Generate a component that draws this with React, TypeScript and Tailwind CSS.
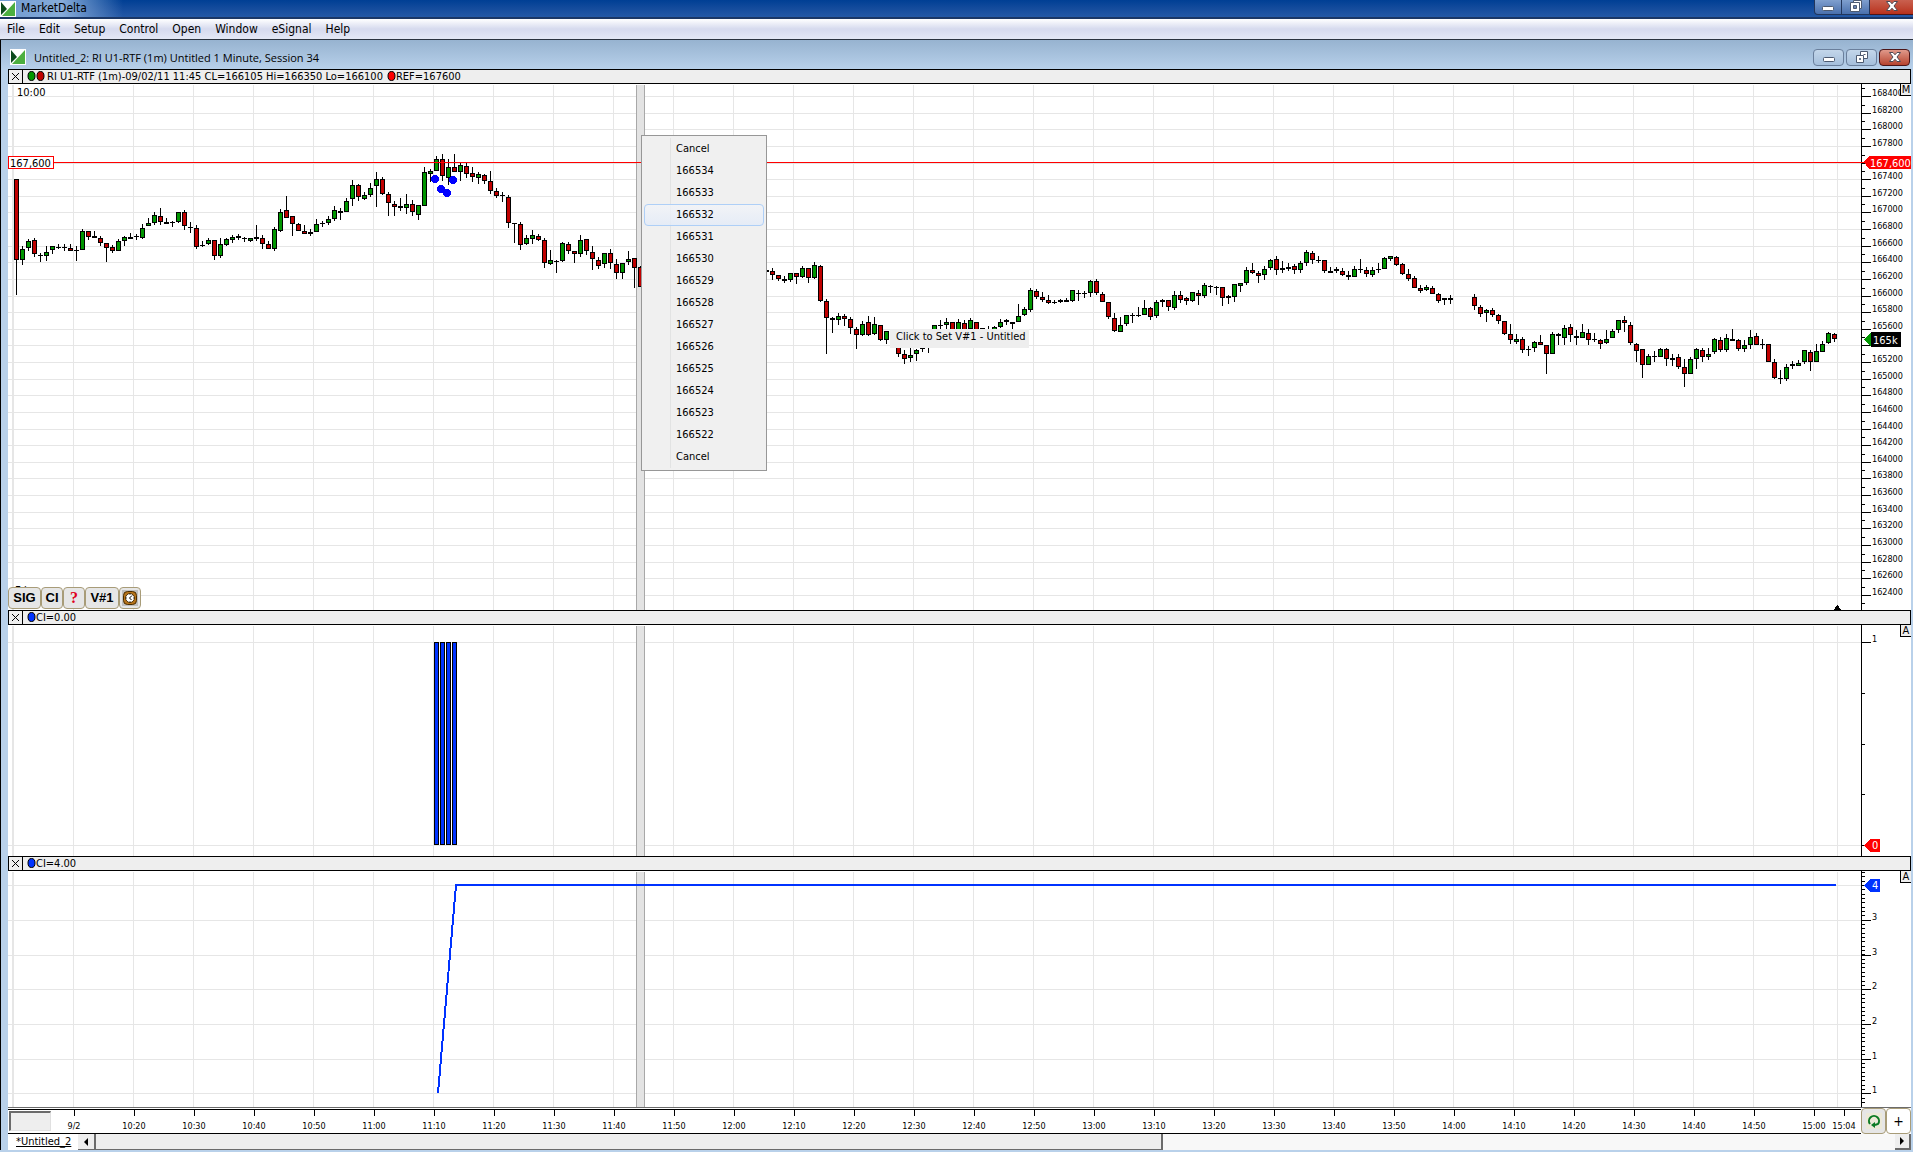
import { ReactNode } from "react";
import { clsx } from "clsx";

type Direction = "up" | "down" | "flat";

// direction, high, body top, body bottom, low (chart canvas units)
const CANDLE_DATA = `
d179,179,260,295 u246,249,260,265 u239,241,248,251 d238,240,254,257 f253,255,256,262 u246,252,256,261 u246,246,250,254 f244,247,248,249 f244,247,248,251 d244,248,251,251
f246,250,251,261 u229,231,250,250 d231,231,237,240 f231,236,238,238 d236,238,243,246 d243,243,248,262 d245,247,251,253 u239,241,251,251 u236,237,241,246 f233,237,239,239
f234,236,237,240 u224,228,238,239 u218,223,226,226 u212,215,223,225 d208,216,222,225 f218,222,224,224 f221,222,223,227 u212,212,222,223 d210,212,226,230 f222,227,228,233
d225,228,247,249 f241,245,246,247 u238,240,244,245 d240,240,256,260 u238,244,256,258 u238,239,245,246 u235,237,240,243 f234,236,238,240 f237,238,239,242 u238,238,241,242
f225,237,239,241 d235,238,244,249 d241,244,249,249 u227,229,249,251 u209,212,231,232 d196,210,218,218 d216,216,224,236 d223,224,231,231 d225,231,234,234 f229,232,234,236
u219,224,232,232 f221,223,224,227 u216,219,223,225 u206,210,219,221 f208,211,213,220 u198,201,212,212 u180,185,199,206 d184,185,197,201 u192,195,199,200 u183,188,195,197
u172,179,186,207 d177,179,194,195 d192,194,203,216 d201,204,207,216 f198,206,208,211 u194,204,208,214 d200,204,212,216 u205,205,215,220 u167,172,206,206 u169,171,174,182
u156,159,171,171 d154,159,176,181 u159,167,178,185 d154,167,172,172 u163,165,172,181 d163,166,174,178 d167,173,177,182 u172,174,178,184 d174,175,181,184 d171,181,191,194
d188,191,196,198 f192,195,196,202 d195,197,223,228 f223,223,224,243 d222,224,245,250 u235,238,244,245 u230,235,239,244 d234,236,240,241 d238,240,263,268 u250,260,264,265
f260,261,262,273 u242,243,261,262 d242,244,251,254 d251,251,254,263 u235,240,254,257 d239,239,251,255 d246,252,259,270 d257,260,266,269 u253,253,264,268 d249,253,263,269
d259,264,273,279 u263,263,273,279 u251,259,262,265 d258,258,268,288 d266,267,287,287 f268,268,269,270 f268,268,269,270 f268,268,269,270 f268,268,269,270 f268,268,269,270
f268,268,269,270 f268,268,269,270 f268,268,269,270 f268,268,269,270 f268,268,269,270 f268,268,269,270 f268,268,269,270 f268,268,269,270 f268,268,269,270 f268,268,269,270
f268,268,269,270 f268,268,269,270 f268,268,269,270 f268,268,269,270 f268,268,269,270 f270,270,272,272 d268,271,275,280 d275,275,279,281 f276,279,281,283 u273,273,280,282
d273,273,277,284 u266,268,277,278 d268,268,278,283 u262,265,278,279 d265,266,301,302 d299,301,318,354 f317,318,320,333 u313,316,320,325 d314,316,319,326 d317,319,328,334
d327,329,335,349 u321,324,335,336 d316,322,335,336 u317,324,334,335 d325,325,340,341 u331,331,340,344 d329,332,338,340 d336,338,354,357 d350,354,359,364 u348,355,358,362
u349,350,354,361 f346,348,349,352 f340,343,344,353 u325,325,335,335 f320,325,326,329 u318,322,325,329 d322,322,335,335 u319,322,335,335 d320,323,330,334 u318,320,329,334
d322,322,332,334 u328,328,332,334 f326,331,332,334 u326,327,332,334 u319,322,327,328 f319,320,322,325 f322,322,324,329 u304,316,322,322 u307,309,315,316 u288,290,310,312
d289,291,297,299 d292,297,300,302 d295,300,303,304 f300,302,303,304 f299,300,302,303 f298,300,302,302 u290,290,301,302 f290,293,294,301 f291,293,294,298 u280,281,293,297
d279,281,293,295 d292,294,302,302 d302,302,317,319 d313,318,331,332 u317,325,332,332 u315,315,324,326 f313,315,316,323 f307,315,316,317 u300,308,315,315 d307,308,317,320
u300,302,316,318 f299,300,302,307 d300,300,307,311 u291,295,308,310 d291,295,300,303 d297,298,301,305 u292,292,301,302 d290,293,296,305 u283,285,296,298 f285,286,287,293
f286,287,288,295 d287,287,298,306 f295,296,298,304 u284,284,297,302 u283,283,286,292 u267,270,283,285 d263,270,273,274 d271,273,276,283 u266,269,275,280 u259,260,268,270
d256,259,270,275 f261,268,270,273 f263,267,269,271 d264,266,270,274 u261,263,270,273 u250,252,263,266 d251,253,260,264 f256,260,261,263 d260,260,271,273 f267,271,273,273
f267,269,271,273 d268,271,275,276 f271,275,277,280 u266,269,277,277 f259,269,270,273 d267,270,274,277 u267,270,275,277 f263,269,270,273 u257,258,269,269 u256,256,259,261
d256,257,265,266 d263,264,274,275 d269,274,279,281 d276,278,288,288 d285,288,291,293 u285,287,290,291 d286,288,294,294 d293,294,301,303 f298,298,300,305 f295,298,300,304
- - - d294,297,306,310 d305,307,314,317 u309,310,313,322 d308,310,315,317 d314,315,321,324 d321,321,334,335 d324,334,340,344
u334,339,342,344 d337,339,350,353 f346,349,350,356 u341,342,348,352 d335,342,345,345 d345,345,354,374 u332,334,354,354 f333,334,336,345 u325,328,338,345 d324,327,335,342
f330,336,338,345 u324,332,338,338 d329,333,340,345 f333,339,340,342 d339,340,344,349 u330,339,343,344 u329,331,338,338 u320,320,330,333 d316,320,323,332 d322,325,343,345
d343,344,351,362 d349,349,365,378 u354,356,365,365 f351,356,357,362 u348,349,357,357 d348,349,359,366 f354,358,360,366 d354,357,367,369 d359,367,374,387 u357,359,374,374
u348,349,359,369 d348,350,357,362 u348,354,357,360 u338,339,352,354 d337,340,350,352 u334,338,350,352 f329,339,341,341 d339,340,349,351 u340,345,349,352 u330,337,345,349
d333,336,345,345 f339,344,345,349 d344,344,362,362 d359,362,378,379 f370,378,379,384 u364,367,379,381 f361,364,366,369 u360,363,366,366 u350,350,362,364 d350,352,362,371
u344,351,362,362 u341,344,352,352 u332,333,343,344 d333,334,339,342
`;

const DIRECTIONS: Record<string, Direction> = { u: "up", d: "down", f: "flat" };

const BODY_COLORS: Record<Direction, string> = {
  up: "#009600",
  down: "#c00000",
  flat: "#000000",
};

const candles = CANDLE_DATA.trim()
  .split(/\s+/)
  .map((entry, i) => ({ entry, x: 16 + i * 6 }))
  .filter(({ entry }) => entry !== "-")
  .map(({ entry, x }) => {
    const [high, top, bottom, low] = entry.slice(1).split(",").map(Number);
    return { x, direction: DIRECTIONS[entry[0]], high, top, bottom, low };
  });

const gridColumns = [...Array.from({ length: 30 }, (_, i) => 73 + i * 60), 1837];

// The last price flag takes the place of this row's label
const LAST_PRICE_ROW = 165400;

const priceRows = Array.from({ length: 31 }, (_, i) => ({
  price: 168400 - i * 200,
  y: Math.round(96 + i * 16.63),
}));

const countRows = [
  { y: 885, label: "4" },
  { y: 920, label: "3" },
  { y: 955, label: "3" },
  { y: 989, label: "2" },
  { y: 1024, label: "2" },
  { y: 1059, label: "1" },
  { y: 1093, label: "1" },
];

const timeLabels = Array.from({ length: 30 }, (_, i) => {
  const minutes = 610 + i * 10;
  const text = `${Math.floor(minutes / 60)}:${String(minutes % 60).padStart(2, "0")}`;
  return { x: 74 + i * 60, text: i === 0 ? "9/2" : text };
}).concat({ x: 1844, text: "15:04" });

const menuItems = ["File", "Edit", "Setup", "Control", "Open", "Window", "eSignal", "Help"];

const priceChoices = [
  "Cancel",
  ...Array.from({ length: 13 }, (_, i) => String(166534 - i)),
  "Cancel",
];

function Logo() {
  return (
    <svg width="16" height="16" viewBox="0 0 16 16" className="shrink-0">
      <rect width="16" height="16" fill="#fff" />
      <path d="M1 1L7 8L1 14Z" fill="#0b4a1c" />
      <path d="M15 1V15H2Z" fill="#4caf3f" />
    </svg>
  );
}

function MinimizeIcon() {
  return (
    <svg width="12" height="12" viewBox="0 0 12 12">
      <rect x="0.5" y="6.5" width="11" height="4" rx="1" fill="#fff" stroke="#4d5a70" />
    </svg>
  );
}

function MaximizeIcon() {
  return (
    <svg width="12" height="12" viewBox="0 0 12 12" fill="#fff" stroke="#4d5a70">
      <path d="M3.500 0.500H11.500V8.500H3.500Z" />
      <path d="M0.500 2.500H9.500V11.500H0.500Z" />
      <path d="M3.500 5.500H6.500V8.500H3.500Z" fill="#6d87b5" />
    </svg>
  );
}

function RestoreIcon() {
  return (
    <svg width="12" height="12" viewBox="0 0 12 12" fill="#fff" stroke="#4d5a70">
      <path d="M4.500 0.500H11.500V7.500H4.500Z" />
      <path d="M7.500 3.500H9.500" />
      <path d="M0.500 4.500H7.500V11.500H0.500Z" />
      <path d="M3.500 7.500H4.500V8.500H3.500Z" fill="#6d87b5" />
    </svg>
  );
}

function CloseIcon() {
  return (
    <svg width="12" height="12" viewBox="0 0 12 12">
      <path
        d="M0.500 1.500H4L6 3.800L8 1.500H11.500L8 6L11.500 10.500H8L6 8.200L4 10.500H0.500L4 6Z"
        fill="#fff"
        stroke="#4d4a55"
      />
    </svg>
  );
}

function ClockIcon() {
  return (
    <svg width="16" height="16" viewBox="0 0 16 16" className="shrink-0">
      <rect width="16" height="16" fill="#c0c0c0" />
      <rect x="1.500" y="1.500" width="13" height="13" rx="4" fill="#b8741a" stroke="#4a2c00" />
      <circle cx="8" cy="8" r="4.500" fill="#fff" stroke="#4a2c00" />
      <path d="M10 5.500L7.500 8L9.500 10" fill="none" stroke="#000" />
      <path d="M8 4V5M8 11V12M4 8H5M11 8H12" stroke="#555" />
    </svg>
  );
}

function RefreshIcon() {
  return (
    <svg width="16" height="16" viewBox="0 0 16 16">
      <rect width="16" height="16" fill="#ece9d8" />
      <path d="M4 11A5 5 0 1 1 12 11L9 12" fill="none" stroke="#0b7a24" strokeWidth="2" />
      <path d="M5 12L9 9V15Z" fill="#0b7a24" />
    </svg>
  );
}

// The round series marker shown in front of a legend entry
function SeriesDot({ color }: { color: string }) {
  return (
    <svg width="9" height="11" viewBox="0 0 9 11" className="shrink-0">
      <ellipse cx="4.5" cy="5" rx="3.5" ry="4.500" fill={color} stroke="#000" />
    </svg>
  );
}

function PaneHeader({ children }: { children: ReactNode }) {
  return (
    <div className="flex h-[15px] items-center border-y border-r border-black bg-[#eeeeee] text-[11px] leading-3">
      <button
        type="button"
        aria-label="Close pane"
        className="flex h-full w-[15px] shrink-0 items-center justify-center border-x border-black"
      >
        <svg width="7" height="7" viewBox="0 0 7 7" stroke="#000">
          <path d="M0 0L7 7M7 0L0 7" />
        </svg>
      </button>
      <div className="flex items-center pl-1 whitespace-pre">{children}</div>
    </div>
  );
}

interface PaneProps {
  top: number;
  height: number;
  rows: number[];
  axis: ReactNode;
  badge: string;
  children?: ReactNode;
  overlay?: ReactNode;
}

function Pane({ top, height, rows, axis, badge, children, overlay }: PaneProps) {
  return (
    <div className="relative flex bg-white">
      <svg height={height} className="min-w-0 flex-1" shapeRendering="crispEdges">
        {rows.map((y) => (
          <rect key={y} x="0" y={y - top} width="100%" height="1" fill="#e6e6e6" />
        ))}
        <g transform={`translate(-8 ${-top})`}>
          <rect x="12" y={top + 1} width="2" height={height} fill="#e6e6e6" />
          {gridColumns.map((x) => (
            <rect key={x} x={x} y={top + 1} width="1" height={height} fill="#e6e6e6" />
          ))}
          <rect x="636" y={top + 1} width="9" height={height} fill="#e3e3e3" />
          <rect x="636" y={top + 1} width="1" height={height} fill="#a8a8a8" />
          <rect x="644" y={top + 1} width="1" height={height} fill="#a8a8a8" />
          {children}
        </g>
      </svg>
      <svg width="50" height={height} className="shrink-0" shapeRendering="crispEdges">
        <g transform={`translate(-1861 ${-top})`}>
          <rect x="1861" y={top} width="1" height={height} />
          {axis}
        </g>
      </svg>
      <button
        type="button"
        className="absolute top-0 right-0 h-3 w-[11px] border-b border-l border-black bg-[#eeeeee] text-[11px] leading-[11px]"
      >
        {badge}
      </button>
      {overlay}
    </div>
  );
}

function Tick({ y, major }: { y: number; major?: boolean }) {
  return <rect x="1862" y={y} width={major ? 9 : 3} height="1" />;
}

function AxisFlag({ y, color, label }: { y: number; color: string; label: string }) {
  return (
    <>
      <path d={`M1864 ${y}L1870 ${y - 6}H1880V${y + 7}H1870Z`} fill={color} />
      <text x="1872" y={y + 4} fontSize="11" fill="#fff">
        {label}
      </text>
    </>
  );
}

function PricePane() {
  return (
    <Pane
      top={84}
      height={526}
      rows={priceRows.map((row) => row.y)}
      badge="M"
      axis={
        <>
          {priceRows.map(({ price, y }) => (
            <g key={price}>
              <Tick y={y - 8} />
              <Tick y={y} major />
              {price !== LAST_PRICE_ROW && (
                <text x="1872" y={y} fontSize="9">
                  {price}
                </text>
              )}
            </g>
          ))}
          <Tick y={603} />
          <rect x="1861" y="162" width="6" height="1" fill="#f00" />
          <path d="M1864 162L1869 156H1911V169H1869Z" fill="#f00" />
          <text x="1870" y="167" fontSize="11" fill="#fff">
            167,600
          </text>
          <path d="M1864 340L1871 332V347Z" fill="#009600" />
          <rect x="1871" y="332" width="30" height="15" />
          <text x="1873" y="344" fontSize="11" fill="#fff">
            165k
          </text>
        </>
      }
      overlay={
        <div className="absolute bottom-px left-0 flex h-[22px] font-['Liberation_Sans',sans-serif] text-[13px] font-bold">
          <ToolButton className="w-[33px]">SIG</ToolButton>
          <ToolButton className="w-[22px]">CI</ToolButton>
          <ToolButton className="w-[22px] font-['Liberation_Serif',serif] text-base text-[#e00020]">
            ?
          </ToolButton>
          <ToolButton className="w-[34px]">V#1</ToolButton>
          <ToolButton className="w-[22px]" label="Time">
            <ClockIcon />
          </ToolButton>
        </div>
      }
    >
      {candles.map(({ x, direction, high, top, bottom, low }) => (
        <g key={x}>
          <rect x={x} y={high} width="1" height={low - high} />
          <rect x={x - 2} y={top} width="5" height={bottom - top} />
          {bottom - top > 2 && (
            <rect x={x - 1} y={top + 1} width="3" height={bottom - top - 2} fill={BODY_COLORS[direction]} />
          )}
        </g>
      ))}
      <rect x="8" y="162" width="5000" height="1" fill="#f00" />
      <rect x="8.500" y="156.500" width="45" height="12" fill="#fff" stroke="#f00" />
      <text x="10" y="167" fontSize="11">
        167,600
      </text>
      <text x="17" y="96" fontSize="11">
        10:00
      </text>
      <text x="15" y="594" fontSize="11">
        Fri
      </text>
      {[[435, 179], [441, 189], [447, 193], [453, 180]].map(([x, y]) => (
        <circle key={x} cx={x} cy={y} r="4" fill="#00f" />
      ))}
      <path d="M1834 610L1837 605H1838L1841 610Z" />
    </Pane>
  );
}

function SignalPane() {
  return (
    <Pane
      top={625}
      height={231}
      rows={[642, 845]}
      badge="A"
      axis={
        <>
          <Tick y={642} major />
          <text x="1872" y="642" fontSize="9">
            1
          </text>
          {[693, 744, 794, 845].map((y) => (
            <Tick key={y} y={y} />
          ))}
          <AxisFlag y={845} color="#f00" label="0" />
        </>
      }
    >
      {[434, 440, 446, 452].map((x) => (
        <g key={x}>
          <rect x={x} y="642" width="5" height="203" />
          <rect x={x + 1} y="643" width="3" height="201" fill="#0033ff" />
        </g>
      ))}
    </Pane>
  );
}

function CountPane() {
  return (
    <Pane
      top={871}
      height={236}
      rows={countRows.map((row) => row.y)}
      badge="A"
      axis={
        <>
          {Array.from({ length: 54 }, (_, i) => (
            <Tick key={i} y={Math.round(872 + i * 4.34)} />
          ))}
          {countRows.slice(1).map(({ y, label }) => (
            <g key={y}>
              <Tick y={y} major />
              <text x="1872" y={y} fontSize="9">
                {label}
              </text>
            </g>
          ))}
          <AxisFlag y={885} color="#0033ff" label="4" />
        </>
      }
    >
      <path d="M438 1093L456 885H1836" fill="none" stroke="#0033ff" strokeWidth="2" />
    </Pane>
  );
}

interface ToolButtonProps {
  children: ReactNode;
  className?: string;
  label?: string;
}

function ToolButton({ children, className, label }: ToolButtonProps) {
  return (
    <button
      type="button"
      aria-label={label}
      className={clsx(
        "flex items-center justify-center rounded-sm border border-[#a89c78] bg-[#e6e6e6] leading-4",
        className,
      )}
    >
      {children}
    </button>
  );
}

function TimeAxis() {
  return (
    <div className="flex h-[27px] border-t border-[#6b6b6b] bg-white">
      <div className="relative mt-px min-w-0 flex-1 border-y border-black">
        <svg width="100%" height="23" className="block" shapeRendering="crispEdges">
          {timeLabels.map(({ x, text }) => (
            <g key={x}>
              <rect x={x - 8} y="0" width="1" height="6" />
              <text x={x - 8} y="19" fontSize="9" textAnchor="middle">
                {text}
              </text>
            </g>
          ))}
        </svg>
        <div className="absolute top-px left-px h-5 w-[42px] border border-t-2 border-l-2 border-[#e0e0e0] border-t-[#6b6b6b] border-l-[#6b6b6b] bg-[#eeeeee]" />
      </div>
      <button
        type="button"
        aria-label="Refresh"
        className="flex w-[25px] items-center justify-center rounded-sm border border-[#a89c78] bg-[#e6e6e6]"
      >
        <RefreshIcon />
      </button>
      <button
        type="button"
        className="w-[25px] rounded-sm border border-[#a89c78] bg-white text-sm leading-4"
      >
        +
      </button>
    </div>
  );
}

function SheetBar() {
  return (
    <div className="flex h-4 bg-white text-[11px] leading-4">
      <a href="#untitled-2" className="w-[70px] pl-2 underline">
        *Untitled_2
      </a>
      <button
        type="button"
        aria-label="Scroll left"
        className="flex w-[18px] items-center justify-center border-r-2 border-b border-[#6b6b6b] bg-[#eeeeee]"
      >
        <svg width="4" height="8" viewBox="0 0 4 8">
          <path d="M4 0V8L0 4Z" />
        </svg>
      </button>
      <div className="flex flex-1 bg-[#f8f8f8]">
        <div className="w-[59.3%] border-r-2 border-b border-[#6b6b6b] bg-[#eeeeee]" />
      </div>
      <button
        type="button"
        aria-label="Scroll right"
        className="flex w-4 items-center justify-center border-r-2 border-b-2 border-[#6b6b6b] bg-[#eeeeee]"
      >
        <svg width="4" height="8" viewBox="0 0 4 8">
          <path d="M0 0V8L4 4Z" />
        </svg>
      </button>
    </div>
  );
}

function PriceMenu() {
  return (
    <div
      role="menu"
      className="absolute top-[135px] left-[641px] w-[126px] border border-[#979797] bg-[#f0f0f0] p-[2px] text-[11px] leading-5"
    >
      <div className="absolute inset-y-[2px] left-7 w-px bg-[#e2e3e3]" />
      {priceChoices.map((choice, i) => (
        <button
          key={i}
          type="button"
          role="menuitem"
          className={clsx(
            "relative block h-[22px] w-full rounded-sm border pl-[31px] text-left",
            choice === "166532"
              ? "border-[#aecff7] bg-linear-to-b from-[#f2f4f8]/80 to-[#e3ebf8]/80"
              : "border-transparent",
          )}
        >
          {choice}
        </button>
      ))}
    </div>
  );
}

export default function App() {
  return (
    <div className="relative min-h-screen bg-[#b9d1ea] font-['DejaVu_Sans_Condensed','Noto_Sans',sans-serif] text-black">
      <header className="flex h-[19px] justify-between border-b-2 border-b-[#1b3766] bg-linear-to-b from-[#003f94] to-[#2458a5]">
        <div className="flex items-center bg-linear-to-r from-[#6f9ad0] via-[#86abd9] to-transparent pr-9">
          <Logo />
          <h1 className="pb-px pl-[5px] text-[12px] leading-4">MarketDelta</h1>
        </div>
        <div className="flex h-[15px]">
          <button
            type="button"
            aria-label="Minimize"
            className="flex w-7 items-start justify-center rounded-bl border border-t-0 border-[#22365c] bg-linear-to-b from-[#7f9fce] to-[#4a70ad]"
          >
            <MinimizeIcon />
          </button>
          <button
            type="button"
            aria-label="Maximize"
            className="flex w-7 items-start justify-center border-r border-b border-[#22365c] bg-linear-to-b from-[#7f9fce] to-[#4a70ad]"
          >
            <MaximizeIcon />
          </button>
          <button
            type="button"
            aria-label="Close"
            className="flex w-[43px] items-start justify-center border-b border-[#4b1518] bg-linear-to-b from-[#c9604f] to-[#b8301a]"
          >
            <CloseIcon />
          </button>
        </div>
      </header>

      <nav className="flex h-[21px] items-center gap-[14px] border-b border-[#2b3340] bg-linear-to-b from-white via-[#d6daee] to-[#e4e8f6] pl-[7px] text-[12px] leading-4">
        {menuItems.map((item) => (
          <button key={item} type="button">
            {item}
          </button>
        ))}
      </nav>

      <div className="border-l border-black">
        <div className="flex h-[29px] items-center justify-between bg-linear-to-b from-[#97b3d0] to-[#b7d0ea] pr-[3px] pl-[9px]">
          <div className="flex items-center pt-[5px]">
            <Logo />
            <h2 className="pt-px pl-2 font-['Open_Sans','Noto_Sans',sans-serif] text-[11px] leading-4">
              Untitled_2: RI U1-RTF (1m) Untitled 1 Minute, Session 34
            </h2>
          </div>
          <div className="flex gap-[2px] pt-[5px]">
            <button
              type="button"
              aria-label="Minimize chart"
              className="flex h-[17px] w-[31px] items-center justify-center rounded-sm border border-[#6a7f9c] bg-linear-to-b from-[#c3d6ea] to-[#a5bfdb]"
            >
              <MinimizeIcon />
            </button>
            <button
              type="button"
              aria-label="Restore chart"
              className="flex h-[17px] w-[31px] items-center justify-center rounded-sm border border-[#6a7f9c] bg-linear-to-b from-[#c3d6ea] to-[#a5bfdb]"
            >
              <RestoreIcon />
            </button>
            <button
              type="button"
              aria-label="Close chart"
              className="flex h-[17px] w-[31px] items-center justify-center rounded-sm border border-[#4b1518] bg-linear-to-b from-[#e0998b] to-[#b5422e]"
            >
              <CloseIcon />
            </button>
          </div>
        </div>

        <main className="ml-[7px] mr-[2px]">
          <PaneHeader>
            <SeriesDot color="#009600" />
            <SeriesDot color="#c00000" />
            <span className="pr-1 pl-[2px]">RI U1-RTF (1m)-09/02/11 11:45 CL=166105 Hi=166350 Lo=166100</span>
            <SeriesDot color="#ff0000" />
            <span>REF=167600</span>
          </PaneHeader>
          <PricePane />
          <PaneHeader>
            <SeriesDot color="#0033ff" />
            <span>CI=0.00</span>
          </PaneHeader>
          <SignalPane />
          <PaneHeader>
            <SeriesDot color="#0033ff" />
            <span>CI=4.00</span>
          </PaneHeader>
          <CountPane />
          <TimeAxis />
          <SheetBar />
        </main>
      </div>

      <PriceMenu />
      <div
        role="tooltip"
        className="absolute top-[329px] left-[890px] h-[19px] w-[139px] bg-[#eeeeee] pl-[6px] text-[11px] leading-4 whitespace-nowrap"
      >
        Click to Set V#1 - Untitled
      </div>
    </div>
  );
}
